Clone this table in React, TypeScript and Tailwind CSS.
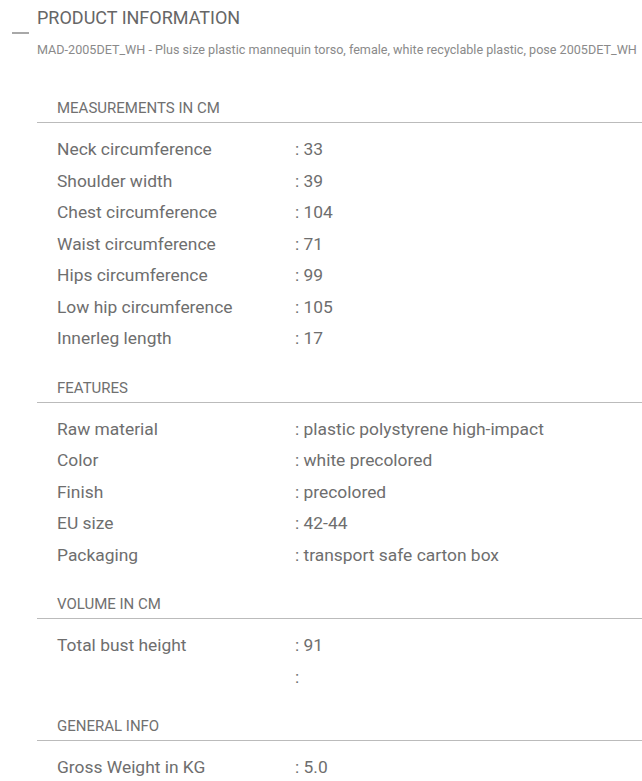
import React from "react";

const sections: { title: string; rows: [string, string][] }[] = [
  {
    title: "MEASUREMENTS IN CM",
    rows: [
      ["Neck circumference", "33"],
      ["Shoulder width", "39"],
      ["Chest circumference", "104"],
      ["Waist circumference", "71"],
      ["Hips circumference", "99"],
      ["Low hip circumference", "105"],
      ["Innerleg length", "17"],
    ],
  },
  {
    title: "FEATURES",
    rows: [
      ["Raw material", "plastic polystyrene high-impact"],
      ["Color", "white precolored"],
      ["Finish", "precolored"],
      ["EU size", "42-44"],
      ["Packaging", "transport safe carton box"],
    ],
  },
  {
    title: "VOLUME IN CM",
    rows: [
      ["Total bust height", "91"],
      ["", ""],
    ],
  },
  {
    title: "GENERAL INFO",
    rows: [["Gross Weight in KG", "5.0"]],
  },
];

export default function App() {
  return (
    <div
      className="w-[642px] h-[781px] overflow-hidden bg-white flex"
      style={{ fontFamily: "Roboto, 'Liberation Sans', sans-serif" }}
    >
      <div className="w-[37px] shrink-0 pt-[32px] pl-[12px]">
        <div className="w-[17px] h-[2px] bg-[#a8a8a8]" />
      </div>
      <div className="flex-1 min-w-0">
        <div className="pt-[6px] text-[18px] leading-[24px] font-normal text-[#666]">
          PRODUCT INFORMATION
        </div>
        <div className="mt-[12px] text-[12.6px] leading-[16px] font-normal text-[#8a8a8a] whitespace-nowrap overflow-hidden">
          MAD-2005DET_WH - Plus size plastic mannequin torso, female, white recyclable plastic, pose 2005DET_WH
        </div>
        {sections.map((s, i) => (
          <div key={s.title} className={i === 0 ? "mt-[40px]" : "mt-[23.5px]"}>
            <div className="pl-[20px] pb-[4px] text-[15px] leading-[20px] font-normal text-[#707070] border-b border-[#bbb]">
              {s.title}
            </div>
            <div className="pt-[10.5px]">
              {s.rows.map(([k, v], j) => (
                <div key={j} className="flex h-[31.5px] items-center text-[17.4px] font-normal text-[#6e6e6e]">
                  <div className="w-[258px] pl-[20px] shrink-0">{k}</div>
                  <div>: {v}</div>
                </div>
              ))}
            </div>
          </div>
        ))}
      </div>
    </div>
  );
}
